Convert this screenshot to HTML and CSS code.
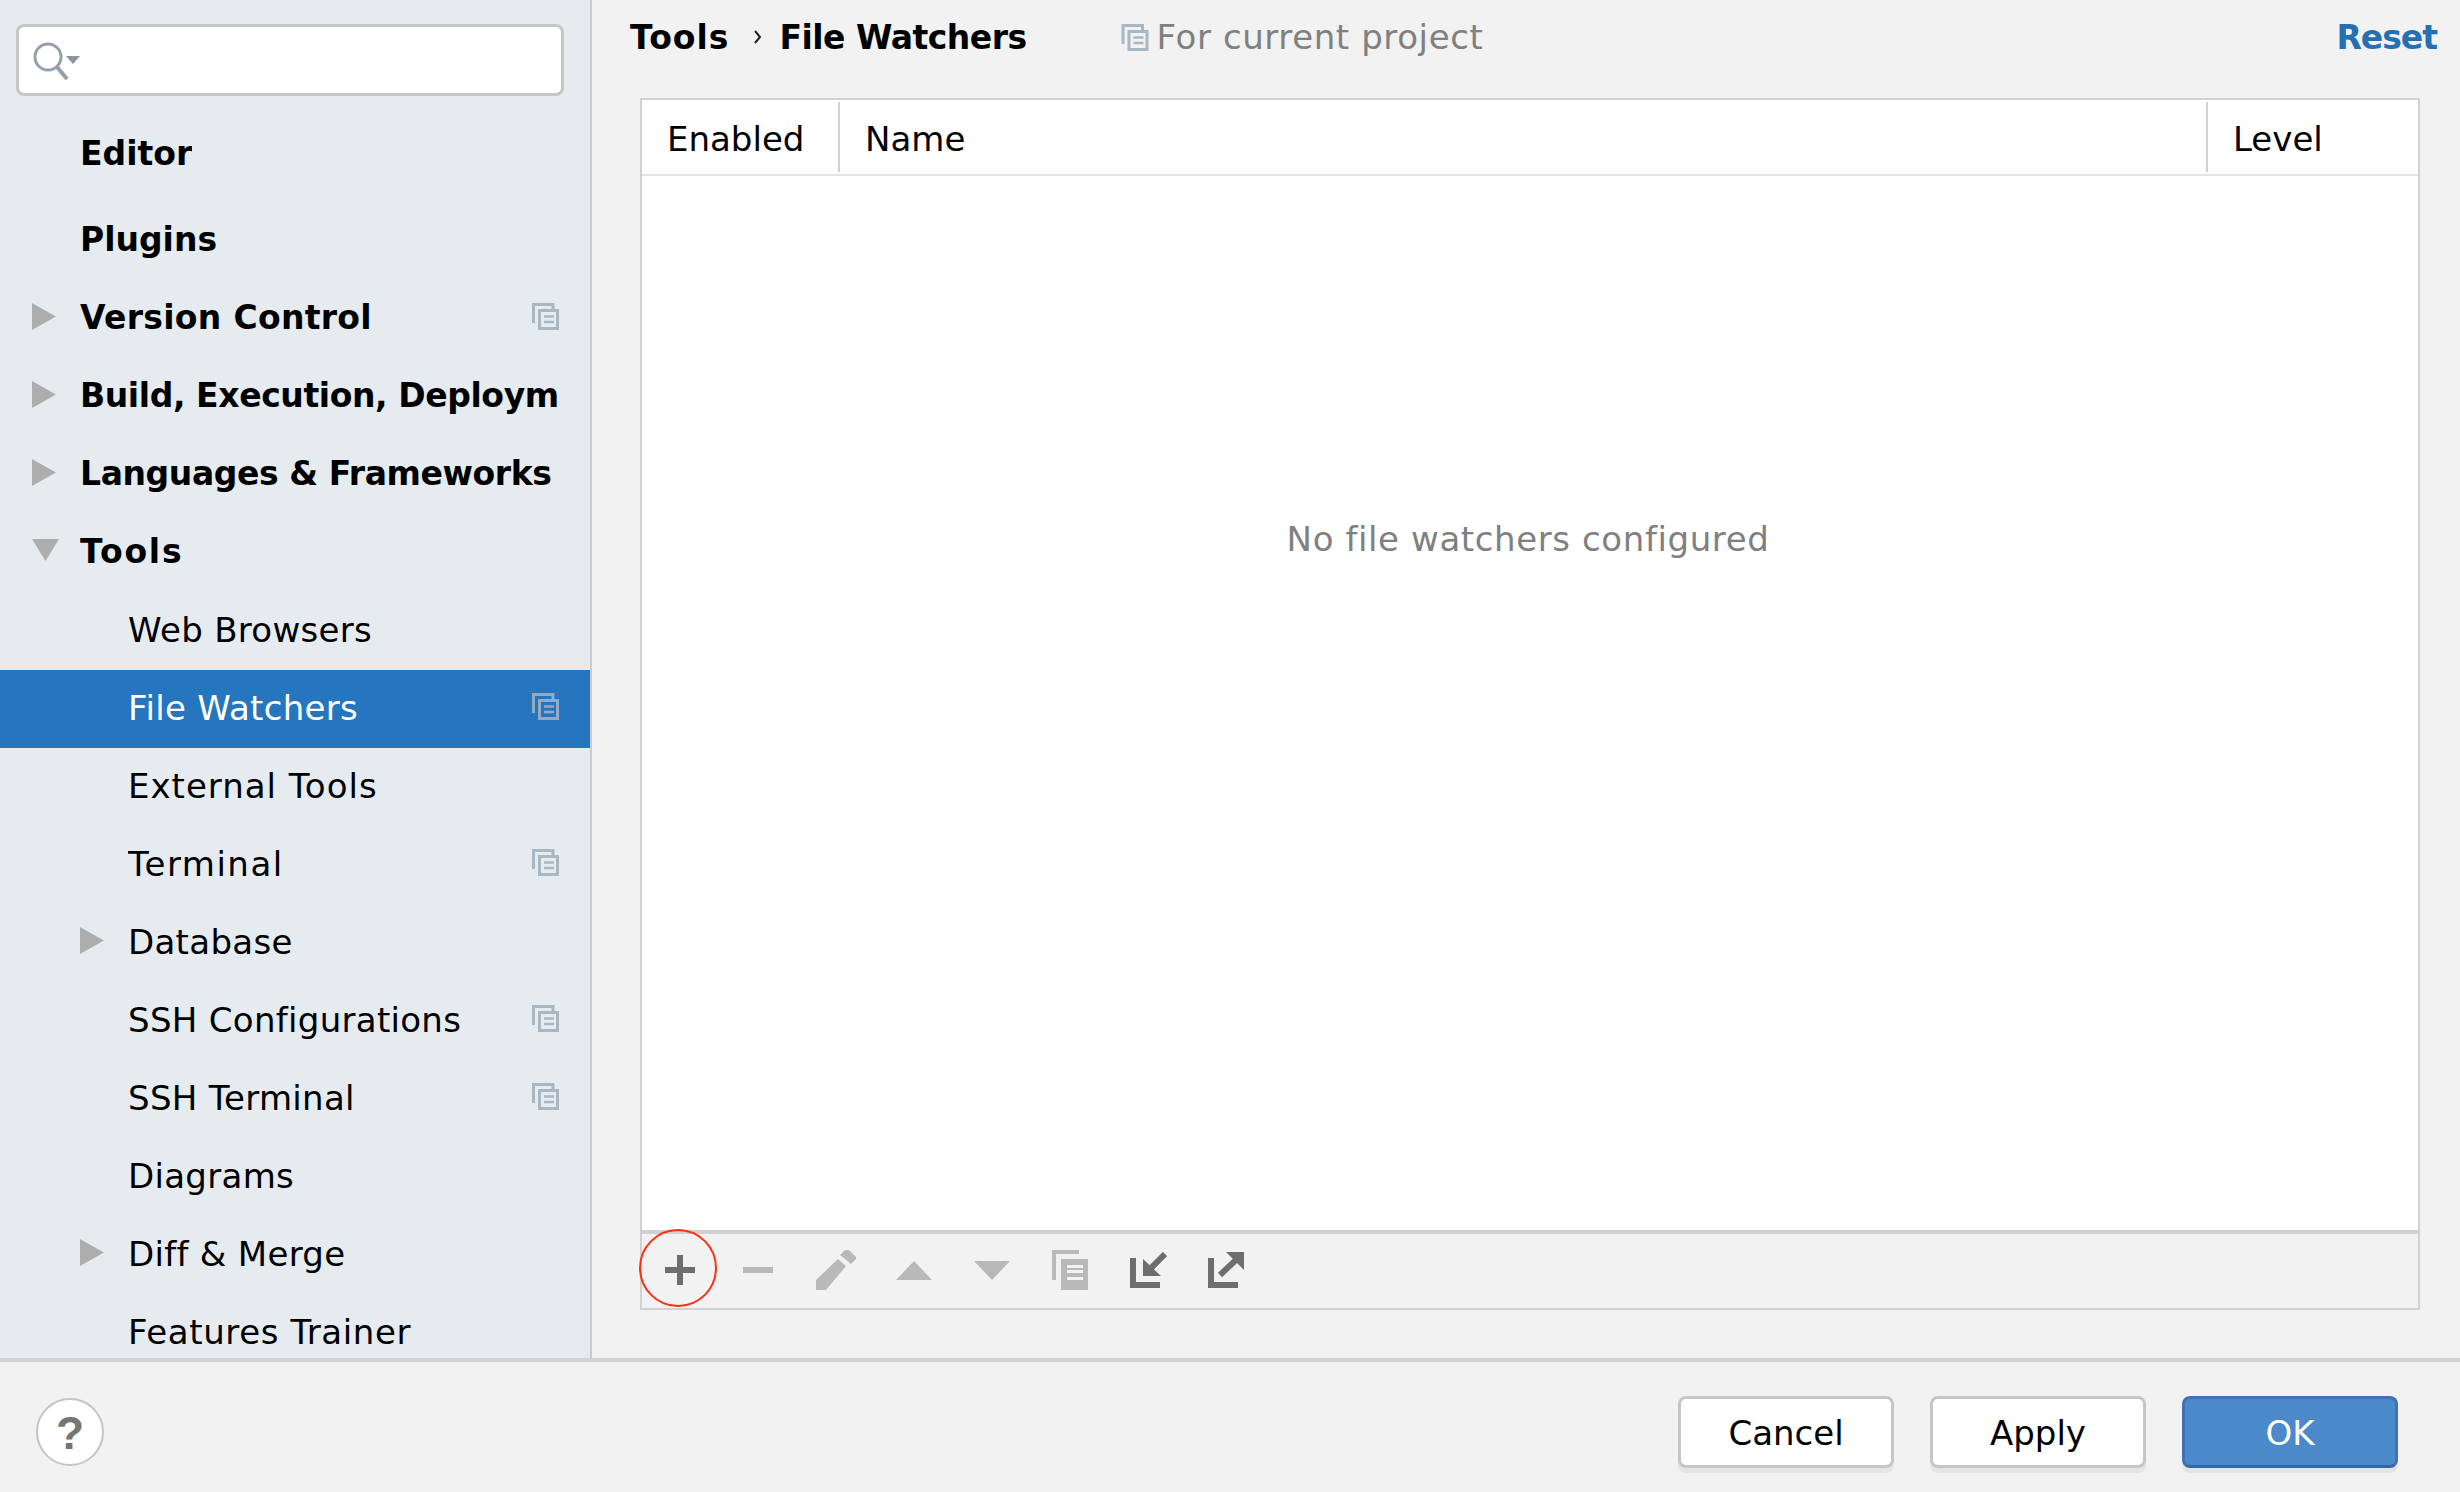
FILE: index.html
```html
<!DOCTYPE html>
<html lang="en">
<head>
    <meta charset="UTF-8">
    <title>Settings - File Watchers</title>
    <link rel="stylesheet" href="styles.css">
</head>
<body>
    <svg class="defs" width="0" height="0">
        <symbol id="copy" viewBox="0 0 27 27">
            <path d="M1.5 20V1.5H21V6" fill="none" stroke="currentColor" stroke-width="3"/>
            <rect x="7.5" y="7.5" width="18" height="18" fill="none" stroke="currentColor" stroke-width="3"/>
            <path d="M12 13.5h10M12 19h10" stroke="currentColor" stroke-width="2.5"/>
        </symbol>
        <symbol id="tri-right" viewBox="0 0 24 27">
            <path d="M0 0L24 13.5L0 27Z" fill="#adadad"/>
        </symbol>
        <symbol id="tri-down" viewBox="0 0 27 22">
            <path d="M0 0H27L13.5 22Z" fill="#adadad"/>
        </symbol>
    </svg>

    <div class="dialog">
        <div class="main">
            <div class="sidebar">
                <div class="search">
                    <svg class="search-icon" width="50" height="42" viewBox="0 0 50 42">
                        <circle cx="15" cy="16" r="13" fill="none" stroke="#94a1ad" stroke-width="3"/>
                        <path d="M24 26L34 38" stroke="#94a1ad" stroke-width="4"/>
                        <path d="M33 15H47L40 23Z" fill="#8a97a3"/>
                    </svg>
                </div>
                <div class="row bold first"><span class="arrow"></span><span class="label">Editor</span></div>
                <div class="row bold second"><span class="arrow"></span><span class="label">Plugins</span></div>
                <div class="row bold loose"><span class="arrow"><svg class="tri"><use href="#tri-right"/></svg></span><span class="label">Version Control</span><svg class="copy"><use href="#copy"/></svg></div>
                <div class="row bold tight"><span class="arrow"><svg class="tri"><use href="#tri-right"/></svg></span><span class="label">Build, Execution, Deployment</span></div>
                <div class="row bold tight"><span class="arrow"><svg class="tri"><use href="#tri-right"/></svg></span><span class="label">Languages &amp; Frameworks</span></div>
                <div class="row bold wide"><span class="arrow"><svg class="tri-open"><use href="#tri-down"/></svg></span><span class="label">Tools</span></div>
                <div class="row child"><span class="label">Web Browsers</span></div>
                <div class="row child selected"><span class="label">File Watchers</span><svg class="copy"><use href="#copy"/></svg></div>
                <div class="row child wide"><span class="label">External Tools</span></div>
                <div class="row child wider"><span class="label">Terminal</span><svg class="copy"><use href="#copy"/></svg></div>
                <div class="row child nested"><span class="arrow"><svg class="tri"><use href="#tri-right"/></svg></span><span class="label">Database</span></div>
                <div class="row child"><span class="label">SSH Configurations</span><svg class="copy"><use href="#copy"/></svg></div>
                <div class="row child"><span class="label">SSH Terminal</span><svg class="copy"><use href="#copy"/></svg></div>
                <div class="row child"><span class="label">Diagrams</span></div>
                <div class="row child nested"><span class="arrow"><svg class="tri"><use href="#tri-right"/></svg></span><span class="label">Diff &amp; Merge</span></div>
                <div class="row child trainer"><span class="label">Features Trainer</span></div>
            </div>

            <div class="content">
                <div class="title-bar">
                    <span class="crumb wide">Tools</span>
                    <svg class="chevron" width="8" height="14" viewBox="0 0 8 14"><path d="M1 1L6 7L1 13" fill="none" stroke="#222" stroke-width="2"/></svg>
                    <span class="crumb narrow">File Watchers</span>
                    <svg class="scope-icon"><use href="#copy"/></svg>
                    <span class="scope">For current project</span>
                    <span class="reset">Reset</span>
                </div>

                <div class="table">
                    <div class="table-head">
                        <div class="col col-enabled">Enabled</div>
                        <div class="col col-name">Name</div>
                        <div class="col col-level">Level</div>
                    </div>
                    <div class="table-body">No file watchers configured</div>
                    <div class="toolbar">
                        <span class="highlight"></span>
                        <span class="tool">
                            <svg width="30" height="30" viewBox="0 0 30 30"><path d="M12 0h6v12h12v6H18v12h-6V18H0v-6h12z" fill="#6e6e6e"/></svg>
                        </span>
                        <span class="tool">
                            <svg width="30" height="6" viewBox="0 0 30 6"><rect width="30" height="6" fill="#b9b9b9"/></svg>
                        </span>
                        <span class="tool">
                            <svg width="40" height="40" viewBox="0 0 40 40"><path d="M0 30L22 9L30 16L10 40H0Z" fill="#b9b9b9"/><path d="M24 5L29 0H33L40 7V9L35 14Z" fill="#b9b9b9"/></svg>
                        </span>
                        <span class="tool">
                            <svg width="36" height="19" viewBox="0 0 36 19"><path d="M18 0L36 19H0Z" fill="#b9b9b9"/></svg>
                        </span>
                        <span class="tool">
                            <svg width="36" height="19" viewBox="0 0 36 19"><path d="M0 0H36L18 19Z" fill="#b9b9b9"/></svg>
                        </span>
                        <span class="tool">
                            <svg width="36" height="40" viewBox="0 0 36 40">
                                <path d="M0 0H27V4H4V30H0Z" fill="#b9b9b9"/>
                                <rect x="9" y="9" width="27" height="31" fill="#b9b9b9"/>
                                <path d="M15 16.5H31M15 21.5H31M15 28.5H31" stroke="#f2f2f2" stroke-width="3"/>
                            </svg>
                        </span>
                        <span class="tool">
                            <svg width="37" height="36" viewBox="0 0 37 36">
                                <path d="M0 6H6V30H30V36H0Z" fill="#6e6e6e"/>
                                <path d="M13 7V24H31Z" fill="#6e6e6e"/>
                                <path d="M18 19L35 2" stroke="#6e6e6e" stroke-width="6"/>
                            </svg>
                        </span>
                        <span class="tool">
                            <svg width="37" height="36" viewBox="0 0 37 36">
                                <path d="M0 6H6V30H30V36H0Z" fill="#6e6e6e"/>
                                <path d="M18 0H36V18Z" fill="#6e6e6e"/>
                                <path d="M30 6L12 23" stroke="#6e6e6e" stroke-width="6"/>
                            </svg>
                        </span>
                    </div>
                </div>
            </div>
        </div>

        <div class="footer">
            <div class="help">?</div>
            <div class="buttons">
                <div class="btn">Cancel</div>
                <div class="btn">Apply</div>
                <div class="btn btn-ok">OK</div>
            </div>
        </div>
    </div>
</body>
</html>
```

FILE: styles.css
```css
body { margin: 0; background: #f2f2f2; color: #000; font-family: "DejaVu Sans", sans-serif; font-size: 34px; }
.defs { position: absolute; }
.dialog { display: flex; flex-direction: column; height: 1492px; overflow: hidden; }
.main { display: flex; height: 1358px; }

.sidebar { width: 590px; flex: none; background: #e6ebf0; border-right: 2px solid #c8cbcf; overflow: hidden; }
.search { box-sizing: border-box; height: 72px; width: 548px; margin: 24px 0 0 16px; background: #fff; border: 3px solid #c6c6c6; border-radius: 8px; padding: 14px 0 0 14px; }
.search-icon { display: block; }

.row { box-sizing: border-box; display: flex; align-items: center; height: 78px; padding-left: 32px; padding-bottom: 3px; white-space: nowrap; color: #000; }
.row.first { margin-top: 20px; }
.row.second { margin-top: 8px; }
.bold { font-weight: bold; font-size: 33px; }
.loose { letter-spacing: 0.3px; }
.tight { letter-spacing: -0.4px; }
.wide { letter-spacing: 1px; }
.bold.wide { letter-spacing: 1.8px; }
.narrow { letter-spacing: -0.5px; }
.arrow { width: 48px; flex: none; display: flex; align-items: center; }
.tri { width: 24px; height: 27px; margin-top: -3px; }
.tri-open { width: 27px; height: 22px; margin-top: -3px; }
.label { display: block; max-width: 478px; overflow: hidden; }
.child { padding-left: 128px; letter-spacing: 0.3px; }
.child.wide { letter-spacing: 1px; }
.child.wider { letter-spacing: 1.5px; }
.child.trainer { letter-spacing: 0.6px; }
.child.nested { padding-left: 80px; }
.copy { width: 27px; height: 27px; margin-left: auto; margin-right: 31px; margin-top: -3px; color: #a9b7c2; flex: none; }
.selected { background: #2675bf; color: #fff; }
.selected .copy { color: #94aac0; }

.content { flex: 1; min-width: 0; padding: 0 40px 0 48px; }
.title-bar { display: flex; align-items: center; height: 74px; margin: 0 -17px 24px -10px; }
.crumb { font-weight: bold; font-size: 33px; }
.crumb.wide { letter-spacing: 1px; }
.chevron { margin: 0 17px 0 25px; }
.scope-icon { width: 28px; height: 27px; margin-left: 94px; color: #a9b7c2; }
.scope { margin-left: 8px; color: #808080; letter-spacing: 0.6px; }
.reset { margin-left: auto; color: #2470b3; font-weight: bold; font-size: 33px; letter-spacing: -1px; }

.table { border: 2px solid #d1d1d1; background: #fff; width: 1776px; }
.table-head { display: flex; height: 72px; border-bottom: 2px solid #e3e3e3; padding-top: 2px; }
.col { box-sizing: border-box; display: flex; align-items: center; padding: 3px 0 0 25px; height: 70px; }
.col-enabled { width: 196px; }
.col-name { width: 1368px; border-left: 2px solid #d1d1d1; }
.col-level { flex: 1; border-left: 2px solid #d1d1d1; }
.table-body { height: 1054px; box-sizing: border-box; padding: 343px 4px 0 0; text-align: center; color: #808080; letter-spacing: 0.6px; }

.toolbar { position: relative; display: flex; align-items: center; height: 74px; background: #f2f2f2; border-top: 4px solid #d1d1d1; }
.tool { box-sizing: border-box; display: flex; justify-content: center; align-items: center; width: 78px; height: 74px; padding-bottom: 2px; flex: none; }
.highlight + .tool { margin-left: -1px; }
.highlight { position: absolute; left: -3px; top: -5px; width: 78px; height: 78px; box-sizing: border-box; border: 2px solid #ff2d14; border-radius: 50%; }

.footer { display: flex; align-items: center; justify-content: space-between; flex: 1; border-top: 4px solid #d1d1d1; padding: 9px 62px 0 36px; }
.help { box-sizing: border-box; width: 68px; height: 68px; border: 2px solid #c4c4c4; border-radius: 50%; background: #fff; color: #757575; font-family: "Liberation Sans", sans-serif; font-weight: bold; font-size: 46px; padding-top: 2px; display: flex; align-items: center; justify-content: center; }
.buttons { display: flex; gap: 36px; }
.btn { box-sizing: border-box; width: 216px; height: 72px; border: 3px solid #c6c6c6; border-radius: 8px; background: #fff; padding-top: 2px; display: flex; align-items: center; justify-content: center; box-shadow: 0 5px 0 #e4e4e4; }
.btn-ok { background: #4c89ca; border-color: #3f73b3; border-bottom-color: #3668a8; color: #fff; }
```
